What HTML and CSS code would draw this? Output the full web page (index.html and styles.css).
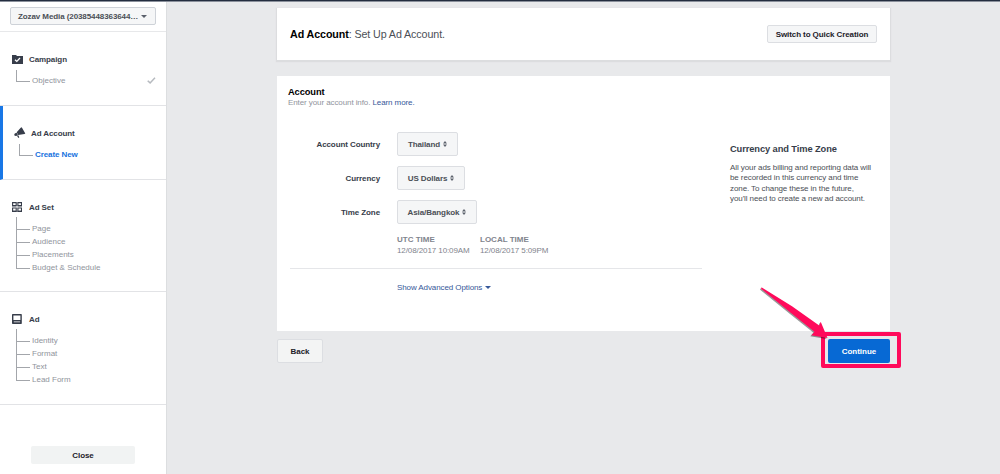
FILE: index.html
```html
<!DOCTYPE html>
<html lang="en">
<head>
  <meta charset="UTF-8">
  <meta name="viewport" content="width=device-width, initial-scale=1">
  <title>Ad Account: Set Up Ad Account</title>
  <link rel="stylesheet" href="styles.css">
</head>
<body>
  <div class="topbar"></div>

  <div class="layout">
    <nav class="sidebar">
      <div class="account-picker">
        <button class="account-btn"><span>Zozav Media (20385448363644…</span><i class="caret"></i></button>
      </div>

      <section class="step campaign">
        <h3>
          <svg width="11" height="9" viewBox="0 0 11 9"><path fill="#373d4a" d="M0 0h4l1 1h6v8H0z"/><path fill="none" stroke="#fff" stroke-width="1.3" d="M3 4.7l1.8 1.7L8 3"/></svg>
          Campaign
        </h3>
        <ul>
          <li>Objective
            <svg class="check" width="9" height="7" viewBox="0 0 9 7"><path fill="none" stroke="#b6babf" stroke-width="1.5" d="M.7 3.7l2.4 2.2L8 .8"/></svg>
          </li>
        </ul>
      </section>

      <section class="step current">
        <h3>
          <svg width="12" height="12" viewBox="0 0 12 12"><path fill="#373d4a" d="M6.7.7l1-.5 3.6 6.4-.8.5-6.3.8-1.5-2.6zM2.6 5.7l1.3 2.4-1.7.9L.7 8.8l-.5-1L.8 6.5zM3 8.8l1.3-.6 1 2-1 .7z"/></svg>
          Ad Account
        </h3>
        <ul>
          <li class="active">Create New</li>
        </ul>
      </section>

      <section class="step adset">
        <h3>
          <svg width="10" height="10" viewBox="0 0 10 10"><g fill="none" stroke="#373d4a" stroke-width="1.1"><path d="M.6.6h3.6v2.9H.6zM5.9.6h3.6v2.9H5.9zM.6 6h3.6v3.4H.6zM5.9 6h3.6v3.4H5.9z"/><path d="M0 4h4.5M5.5 4H10M0 9.3h4.5M5.5 9.3H10"/></g></svg>
          Ad Set
        </h3>
        <ul>
          <li>Page</li>
          <li>Audience</li>
          <li>Placements</li>
          <li>Budget &amp; Schedule</li>
        </ul>
      </section>

      <section class="step ad">
        <h3>
          <svg width="10" height="10" viewBox="0 0 10 10"><path fill="#373d4a" fill-rule="evenodd" d="M.8 0h8.4q.6 0 .6.8v8.4q0 .8-.6.8H.8Q0 10 0 9.2V.8Q0 0 .8 0zM1.4 1.4v4.7h7V1.4zM1.8 7.5v.8h6.3v-.8z"/></svg>
          Ad
        </h3>
        <ul>
          <li>Identity</li>
          <li>Format</li>
          <li>Text</li>
          <li>Lead Form</li>
        </ul>
      </section>

      <button class="close-btn">Close</button>
    </nav>

    <main class="content">
      <header class="card page-header">
        <h1><b>Ad Account</b>: Set Up Ad Account.</h1>
        <button class="quick-btn">Switch to Quick Creation</button>
      </header>

      <div class="card account-card">
        <div class="account-form">
          <h2>Account</h2>
          <p class="intro">Enter your account info. <a>Learn more.</a></p>

          <div class="field">
            <label>Account Country</label>
            <button class="select country">Thailand <svg class="sort" width="4" height="6" viewBox="0 0 4 6"><path d="M2 0l2 2.5H0zM2 6l2-2.5H0z"/></svg></button>
          </div>
          <div class="field">
            <label>Currency</label>
            <button class="select currency">US Dollars <svg class="sort" width="4" height="6" viewBox="0 0 4 6"><path d="M2 0l2 2.5H0zM2 6l2-2.5H0z"/></svg></button>
          </div>
          <div class="field">
            <label>Time Zone</label>
            <button class="select timezone">Asia/Bangkok <svg class="sort" width="4" height="6" viewBox="0 0 4 6"><path d="M2 0l2 2.5H0zM2 6l2-2.5H0z"/></svg></button>
          </div>

          <div class="times">
            <div class="utc"><b>UTC TIME</b><span>12/08/2017 10:09AM</span></div>
            <div><b>LOCAL TIME</b><span>12/08/2017 5:09PM</span></div>
          </div>

          <div class="advanced"><a>Show Advanced Options</a><i class="caret"></i></div>
        </div>

        <aside class="help">
          <h4>Currency and Time Zone</h4>
          <p>All your ads billing and reporting data will<br>be recorded in this currency and time<br>zone. To change these in the future,<br>you'll need to create a new ad account.</p>
        </aside>
      </div>

      <footer class="actions">
        <button class="back-btn">Back</button>
        <div class="continue-wrap">
          <button class="continue-btn">Continue</button>
          <div class="highlight"></div>
          <svg class="arrow" width="72" height="56" viewBox="0 0 72 56"><path d="M.8.4Q-.6 1 .7 2.3L30 26 53.5 44.7 50.3 48.2 66.5 51 59.7 34.8 58.2 38.4 31 19.3z"/></svg>
        </div>
      </footer>
    </main>
  </div>
</body>
</html>
```
FILE: styles.css
```css
* {
  box-sizing: border-box;
}

body {
  margin: 0;
  height: 474px;
  overflow: hidden;
  background: #e8e9eb;
  font-family: "Liberation Sans", Arial, sans-serif;
  font-size: 8px;
  letter-spacing: -0.09px;
  color: #373d4a;
}

h1, h2, h3, h4, p, ul {
  margin: 0;
  padding: 0;
}

button {
  display: flex;
  align-items: center;
  justify-content: center;
  padding: 0;
  border: 1px solid #dcdee2;
  border-radius: 2px;
  background: #f5f6f7;
  font-family: inherit;
  font-size: 8px;
  font-weight: bold;
  letter-spacing: inherit;
  color: #1d2129;
}

.topbar {
  height: 2px;
  background: linear-gradient(#232d3f 1px, #8a909b 1px);
}

.layout {
  display: flex;
  height: 472px;
}

/* sidebar */
.sidebar {
  width: 167px;
  flex: none;
  background: #fff;
  border-right: 1px solid #dcdee0;
}

.account-picker {
  height: 30px;
  padding: 5px 0 0 10px;
  border-bottom: 1px solid #e7e8ea;
}

.account-btn {
  width: 146px;
  height: 18px;
  padding: 0 8px 0 7px;
  justify-content: space-between;
  border-color: #ced2d8;
  color: #4b4f56;
}

.caret {
  border: 3px solid transparent;
  border-top: 3px solid #5a606b;
  border-bottom: 0;
}

.step {
  border-bottom: 1px solid #e2e3e6;
  padding: 21px 0 0 12px;
}

.campaign, .current {
  height: 74px;
}

.adset {
  height: 112px;
}

.ad {
  height: 113px;
}

.current {
  border-left: 3px solid #1877e6;
  padding-left: 11px;
}

.step h3 {
  display: flex;
  align-items: center;
  gap: 6px;
  height: 12px;
  font-size: 8px;
}

.step h3 svg {
  flex: none;
}

.current h3 {
  gap: 5px;
}

.adset h3, .ad h3 {
  gap: 7px;
}

.step ul {
  list-style: none;
  margin: 9px 0 0 4px;
}

.step li {
  position: relative;
  height: 13px;
  line-height: 13px;
  padding-left: 16px;
  letter-spacing: 0;
  color: #90949c;
}

.step li::before {
  content: "";
  position: absolute;
  left: 0;
  top: -5px;
  width: 13px;
  height: 12px;
  border-left: 1px solid #a3a6ab;
  border-bottom: 1px solid #a3a6ab;
}

.step li + li::before {
  top: -6px;
  height: 13px;
}

.campaign li::before, .current li::before {
  top: -4px;
  height: 11px;
}

.step.current ul {
  margin-left: 5px;
}

.step .active {
  color: #1873de;
  font-weight: bold;
  letter-spacing: -0.09px;
}

.check {
  position: absolute;
  left: 131px;
  top: 3px;
}

.close-btn {
  width: 104px;
  height: 18px;
  margin: 41px 0 0 31px;
  border: 0;
  background: #f1f3f3;
}

/* main column */
.content {
  width: 613px;
  margin: 6px 0 0 110px;
}

.card {
  background: #fff;
}

.page-header {
  display: flex;
  align-items: center;
  justify-content: space-between;
  height: 52px;
  padding: 0 13px;
  box-shadow: 0 1px 1px 1px #dcdddf;
}

.page-header h1 {
  font-size: 10.7px;
  font-weight: normal;
  color: #4b4f56;
}

.page-header b {
  color: #000;
}

.quick-btn {
  width: 110px;
  height: 18px;
}

.account-card {
  display: flex;
  height: 255px;
  margin-top: 16px;
}

.account-form {
  width: 453px;
  padding: 10px 0 0 11px;
}

.account-form h2 {
  font-size: 9.3px;
  line-height: 12px;
  color: #000;
}

.intro {
  line-height: 10px;
  color: #90949c;
}

.account-form a {
  color: #365899;
}

.field {
  display: flex;
  align-items: center;
  height: 24px;
  margin-bottom: 10px;
}

.intro + .field {
  margin-top: 24px;
}

.field label {
  width: 92px;
  margin-right: 17px;
  text-align: right;
  font-weight: bold;
}

.select {
  height: 24px;
  gap: 3px;
  color: #4b4f56;
}

.sort {
  fill: #5a606b;
}

.country {
  width: 61px;
}

.currency {
  width: 68px;
}

.timezone {
  width: 80px;
}

.times {
  display: flex;
  margin: 10px 0 0 109px;
  line-height: 11px;
  color: #7f848d;
}

.times b, .times span {
  display: block;
}

.times b {
  letter-spacing: 0;
}

.utc {
  width: 83px;
}

.advanced {
  display: flex;
  align-items: center;
  gap: 3px;
  width: 412px;
  height: 37px;
  margin: 12px 0 0 2px;
  padding-left: 107px;
  border-top: 1px solid #e5e6e9;
}

.advanced .caret {
  border-top-color: #365899;
}

.help {
  padding-top: 67px;
  color: #4b4f56;
}

.help h4 {
  font-size: 9.3px;
  line-height: 12px;
  color: #373d4a;
}

.help p {
  margin-top: 8px;
  line-height: 10.4px;
}

/* bottom buttons */
.actions {
  display: flex;
  justify-content: space-between;
  margin-top: 8px;
}

.back-btn {
  width: 46px;
  height: 24px;
  background: #f3f4f4;
}

.continue-wrap {
  position: relative;
}

.continue-btn {
  width: 62px;
  height: 24px;
  border: 0;
  background: #0769d4;
  letter-spacing: 0;
  color: #fff;
}

.highlight {
  position: absolute;
  left: -7px;
  top: -7px;
  width: 80px;
  height: 36px;
  border: 4px solid #ff0a5b;
  border-radius: 2px;
}

.arrow {
  position: absolute;
  left: -67px;
  top: -52px;
  fill: #ff0a5b;
  filter: drop-shadow(-0.5px 1px 0.5px rgba(0, 0, 0, 0.4));
}
```
